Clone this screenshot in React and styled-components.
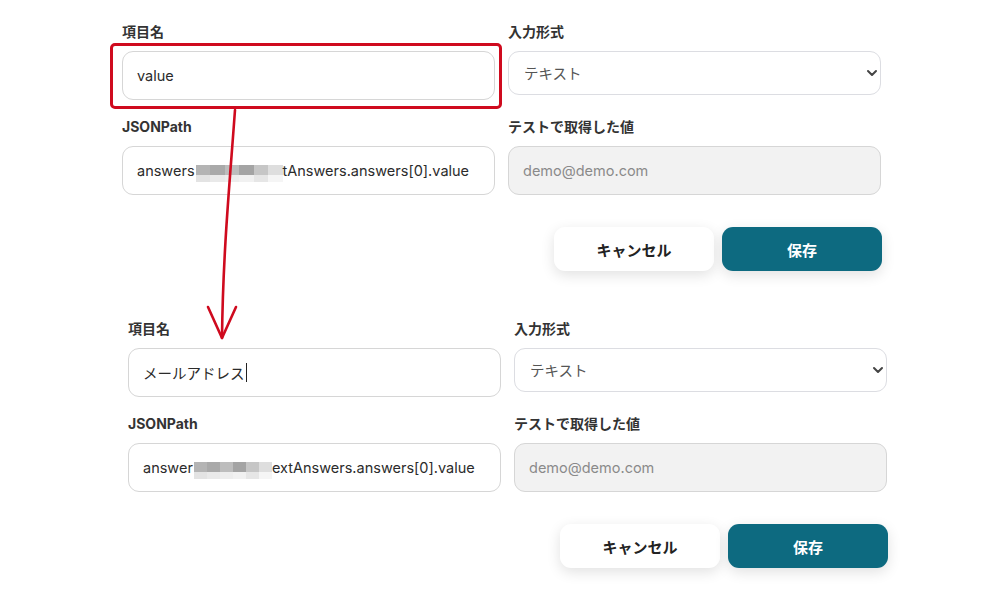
import React from 'react'
import styled, { createGlobalStyle } from 'styled-components'
import { ChevronDown } from 'lucide-react'

const GlobalStyle = createGlobalStyle`
  html, body {
    margin: 0;
    padding: 0;
    background: #fff;
  }
  body {
    font-family: Inter, "Noto Sans CJK JP", sans-serif;
    color: #333;
  }
`

const mosaicTop = ['#b4b4b4', '#a9a9a9', '#bdbdbd', '#a4a4a4', '#c6c6c6', '#dedede']
const mosaicBottom = ['#e3e3e3', '#e9e9e9', '#ededed', '#f1f1f1', '#e6e6e6', '#f5f5f5']

const FormBlock = ({ shift, name, caret, head, tail, mosaicWidth, highlight }) => (
  <Panel $shift={shift}>
    <Grid>
      <Field $highlight={highlight}>
        <Label>項目名</Label>
        <Box>
          {name}
          {caret && <Caret />}
        </Box>
      </Field>
      <Field>
        <Label>入力形式</Label>
        <SelectWrap>
          <Select defaultValue="text">
            <option value="text">テキスト</option>
          </Select>
          <Chevron size={16} strokeWidth={3} />
        </SelectWrap>
      </Field>
      <Field>
        <Label>JSONPath</Label>
        <Box>
          {head}
          <Mosaic $w={mosaicWidth}>
            {mosaicTop.map((c, i) => <Cell key={'t' + i} style={{ background: c }} />)}
            {mosaicBottom.map((c, i) => <Cell key={'b' + i} style={{ background: c }} />)}
          </Mosaic>
          {tail}
        </Box>
      </Field>
      <Field>
        <Label>テストで取得した値</Label>
        <Box $muted>demo@demo.com</Box>
      </Field>
    </Grid>
    <Actions>
      <Button>キャンセル</Button>
      <Button $primary>保存</Button>
    </Actions>
  </Panel>
)

const App = () => {
  return (
    <Page>
      <GlobalStyle />
      <FormBlock shift={0} name="value" head="answers" tail="tAnswers.answers[0].value" mosaicWidth={87} highlight />
      <FormBlock shift={6} name="メールアドレス" caret head="answer" tail="extAnswers.answers[0].value" mosaicWidth={78} />
      <Arrow width="1000" height="608" viewBox="0 0 1000 608">
        <path d="M235 110 C 230 180, 223 250, 222 338" fill="none" stroke="#cf0a1e" strokeWidth="2.6" strokeLinecap="round" />
        <path d="M208 307 L222 338 L236 307" fill="none" stroke="#cf0a1e" strokeWidth="2.6" strokeLinecap="round" strokeLinejoin="round" />
      </Arrow>
    </Page>
  )
}

export default App

const Page = styled.div`
  position: relative;
  width: 1000px;
  height: 608px;
  overflow: hidden;
  padding-top: 22px;
  box-sizing: border-box;
`

const Panel = styled.section`
  width: 760px;
  margin-left: ${p => 122 + p.$shift}px;
  margin-bottom: 48px;
`

const Grid = styled.div`
  display: grid;
  grid-template-columns: 373px 373px;
  column-gap: 13px;
  row-gap: 17px;
  align-items: start;
`

const Field = styled.div`
  position: relative;
  display: flex;
  flex-direction: column;
  gap: 9px;
  ${p => p.$highlight && `
    &::after {
      content: '';
      position: absolute;
      left: -12px;
      right: -7px;
      top: 21px;
      bottom: -9px;
      border: 3px solid #cf0a1e;
      border-radius: 5px;
      pointer-events: none;
    }
  `}
`

const Label = styled.div`
  font-size: 14px;
  line-height: 20px;
  font-weight: 700;
  color: #333;
`

const Box = styled.div`
  display: flex;
  align-items: center;
  height: 49px;
  box-sizing: border-box;
  padding: 0 14px;
  border: 1px solid #d6d6d6;
  border-radius: 11px;
  font-size: 14.5px;
  color: ${p => (p.$muted ? '#8a8a8a' : '#2b2b2b')};
  background: ${p => (p.$muted ? '#f2f2f2' : '#fff')};
  white-space: nowrap;
  overflow: hidden;
`

const Caret = styled.span`
  display: inline-block;
  width: 1.5px;
  height: 19px;
  margin-left: 1px;
  background: #222;
`

const Mosaic = styled.span`
  display: inline-grid;
  grid-template-columns: repeat(6, 1fr);
  grid-template-rows: 10px 7px;
  width: ${p => p.$w}px;
  margin: 6px 0 0 1px;
  align-self: center;
`

const Cell = styled.span`
  display: block;
`

const SelectWrap = styled.div`
  position: relative;
`

const Select = styled.select`
  appearance: none;
  width: 100%;
  height: 44px;
  padding: 0 15px;
  border: 1px solid #dcdde2;
  border-radius: 11px;
  background: #fff;
  font-family: Inter, "Noto Sans CJK JP", sans-serif;
  font-size: 14.5px;
  color: #555;
  outline: none;
`

const Chevron = styled(ChevronDown)`
  position: absolute;
  right: 1px;
  top: 14px;
  color: #444;
  pointer-events: none;
`

const Actions = styled.div`
  display: flex;
  justify-content: flex-end;
  gap: 8px;
  margin-top: 32px;
`

const Button = styled.button`
  width: 160px;
  height: 44px;
  border: none;
  border-radius: 11px;
  font-family: Inter, "Noto Sans CJK JP", sans-serif;
  font-size: 15px;
  font-weight: 700;
  cursor: pointer;
  background: ${p => (p.$primary ? '#0d6a80' : '#fff')};
  color: ${p => (p.$primary ? '#fff' : '#222')};
  box-shadow: 0 4px 14px rgba(0, 0, 0, 0.12);
`

const Arrow = styled.svg`
  position: absolute;
  left: 0;
  top: 0;
  pointer-events: none;
`
